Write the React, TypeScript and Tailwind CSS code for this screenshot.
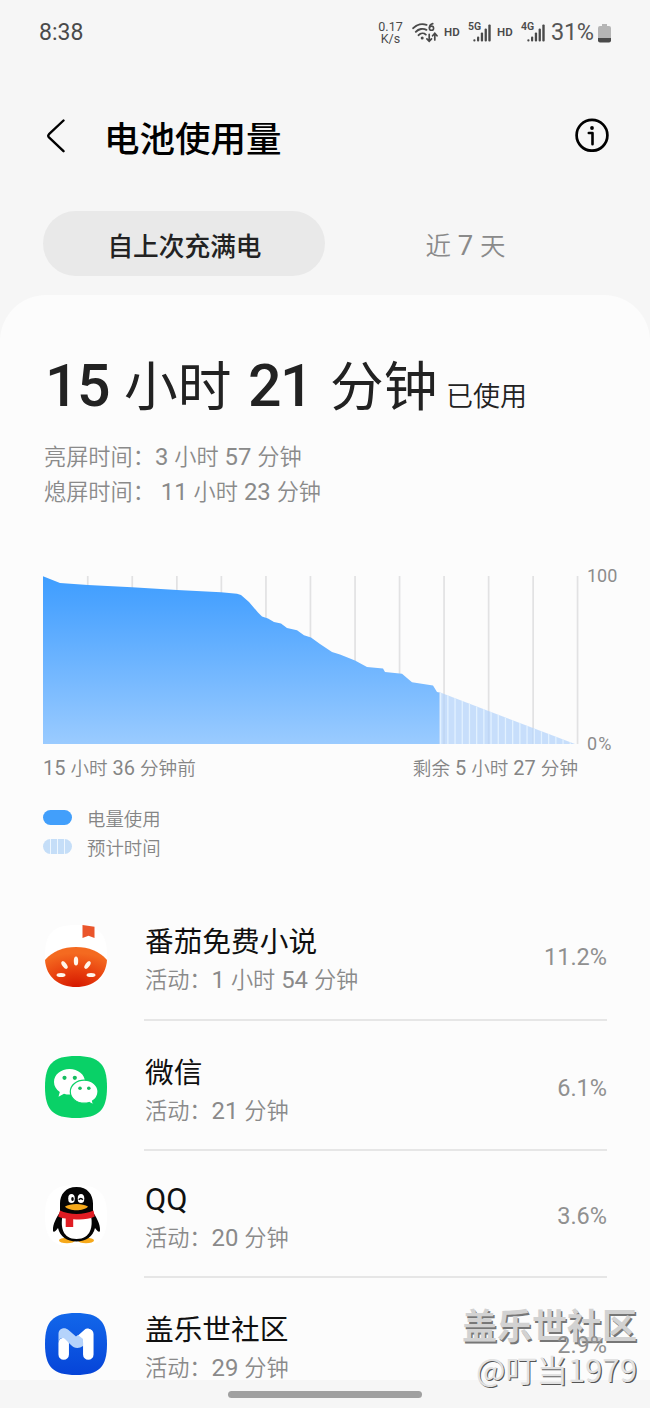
import React from "react";

/** Splits mixed text so Latin runs are set a little larger than the CJK around them. */
function Mixed({ text }: { text: string }) {
  const runs = text.match(/[\x20-\x7e]+|[^\x20-\x7e]+/g) ?? [];
  return (
    <>
      {runs.map((run, i) => (
        <span key={i} className={/^[\x20-\x7e]/.test(run) ? "text-[1.075em] font-normal whitespace-pre" : "whitespace-pre"}>
          {run}
        </span>
      ))}
    </>
  );
}

function Signal() {
  return (
    <svg width="18" height="18" viewBox="0 0 18 18" fill="#4a4a4a">
      <rect x="0.3" y="15.2" width="2.2" height="2.4" rx="1" />
      <rect x="4" y="12.5" width="2.2" height="5.1" rx="1" />
      <rect x="7.8" y="8.5" width="2.3" height="9.1" rx="1" />
      <rect x="11.6" y="4.5" width="2.3" height="13.1" rx="1" />
      <rect x="15.3" y="0.4" width="2.4" height="17.2" rx="1" />
    </svg>
  );
}

function StatusBar() {
  return (
    <div className="flex h-[64px] items-center pt-[2px] text-[#4a4a4a]">
      <div className="ml-[39px] pb-[2px] text-[23px] leading-none">8:38</div>
      <div className="ml-auto mr-[39px] flex h-[30px] items-center">
        <div className="mr-[9px] w-[26px] pl-px text-center text-[12.5px] leading-[12px]">
          <div>0.17</div>
          <div>K/s</div>
        </div>
        <svg width="26" height="22" viewBox="0 0 26 22" fill="none" stroke="#4a4a4a" strokeWidth="1.9" strokeLinecap="round">
          <path d="M1.2 6.2C5 2.2 10.5 1.3 14.5 2.8M3.8 9.8c2.8-3 7.3-3.8 10.6-2M6.6 13.2c2.1-2.3 5.3-2.3 7.2-.6" />
          <circle cx="10.2" cy="16" r="1.5" fill="#4a4a4a" stroke="none" />
          <path d="M20.8 1.6c-2.2.5-3.4 2.4-3.4 4.4" strokeWidth="1.6" />
          <circle cx="19.5" cy="6.2" r="2.1" strokeWidth="1.6" />
          <path d="M17.2 12.4v6.8m-2.3-2.4 2.3 2.5 2.3-2.5M22.8 18v-6.6m-2.2 2.4 2.2-2.5 2.2 2.5" strokeWidth="1.7" />
        </svg>
        <div className="ml-[6px] w-[17px] text-[11.5px] font-semibold leading-none">HD</div>
        <div className="relative ml-[12px] h-[18px] w-[18px]">
          <div className="absolute -left-[5px] -top-[2px] text-[10.5px] font-semibold leading-none">5G</div>
          <Signal />
        </div>
        <div className="ml-[6px] w-[17px] text-[11.5px] font-semibold leading-none">HD</div>
        <div className="relative ml-[13px] h-[18px] w-[18px]">
          <div className="absolute -left-[6px] -top-[2px] text-[10.5px] font-semibold leading-none">4G</div>
          <Signal />
        </div>
        <div className="ml-[6px] w-[43px] whitespace-nowrap text-[23.5px] leading-none tracking-[-0.3px] text-[#555]">31%</div>
        <svg className="ml-[4px]" width="13" height="19" viewBox="0 0 13 19">
          <path d="M4 0h5v2h2a2 2 0 0 1 2 2v11H0V4a2 2 0 0 1 2-2h2z" fill="#b5b5b5" />
          <path d="M0 14h13v2.6a2 2 0 0 1-2 2H2a2 2 0 0 1-2-2z" fill="#4a4a4a" />
        </svg>
      </div>
    </div>
  );
}

const GRID = [44.7, 89.2, 133.8, 178.3, 222.9, 267.4, 312, 356.5, 401, 445.6, 490.1, 534.5];
const STRIPES = Array.from({ length: 19 }, (_, i) => 397 + i * 7.2);

function Chart() {
  return (
    <div className="flex h-[168px]">
      <svg width="536" height="168" viewBox="0 0 536 168">
        <defs>
          <linearGradient id="use" x1="0" y1="0" x2="0" y2="1">
            <stop offset="0" stopColor="#3f9eff" />
            <stop offset="0.15" stopColor="#4ba3ff" />
            <stop offset="1" stopColor="#9acbff" />
          </linearGradient>
          <clipPath id="rest">
            <path d="M396 116L532 168H396z" />
          </clipPath>
        </defs>
        {GRID.map((x) => (
          <rect key={x} x={x - 0.8} y="0" width="1.7" height="168" fill="#e2e2e3" />
        ))}
        <g clipPath="url(#rest)">
          <rect x="396" y="110" width="140" height="58" fill="#b0d2fb" fillOpacity="0.7" />
          {STRIPES.map((x) => (
            <rect key={x} x={x} y="110" width="1.3" height="58" fill="#e2f1ff" />
          ))}
        </g>
        <path
          d="M0 .3L17 7L45 9L89 11.2L134 14L178 16.3L194 17.7L198 19L206 26L215 36.5L219 40.5L225 42.5L231 46L238 47.5L244 52L254 54.3L261 59.3L268 61.5L277 68L289 76L297 78.5L312 84.5L324 91L340 92.5L342 96L359 97.8L369 106.3L390 109.5L394 116L396.3 116.6V168H0z"
          fill="url(#use)"
        />
      </svg>
      <div className="-my-[9px] ml-[8px] flex flex-col justify-between text-[18px] leading-[18px] text-[#8c8c8c]">
        <span>100</span>
        <span className="tracking-[1.2px]">0%</span>
      </div>
    </div>
  );
}

function TomatoIcon() {
  return (
    <svg width="62" height="62" viewBox="0 0 62 62">
      <defs>
        <radialGradient id="tomato" cx="0.5" cy="1" r="0.85">
          <stop offset="0" stopColor="#d41800" />
          <stop offset="0.5" stopColor="#e83f0e" />
          <stop offset="1" stopColor="#f46a20" />
        </radialGradient>
      </defs>
      <path d="M31 0C54 0 62 8 62 31S54 62 31 62 0 54 0 31 8 0 31 0z" fill="#fff" />
      <path d="M0 35C8 26 18 22 31 22s23 4 31 13C61 52 48 62 31 62S1 52 0 35z" fill="url(#tomato)" />
      <path d="M37.5 0 49.5 1.8V13L43.5 10.8 37.5 13z" fill="#ea552b" />
      <g fill="#fff6ec">
        <ellipse cx="31" cy="36" rx="2.2" ry="4.6" />
        <ellipse cx="19.5" cy="40" rx="2.2" ry="4.4" transform="rotate(-36 19.5 40)" />
        <ellipse cx="42.5" cy="40" rx="2.2" ry="4.4" transform="rotate(36 42.5 40)" />
        <ellipse cx="16" cy="50" rx="4.5" ry="2.1" />
        <ellipse cx="46" cy="50" rx="4.5" ry="2.1" />
      </g>
    </svg>
  );
}

function WeChatIcon() {
  return (
    <svg width="62" height="62" viewBox="0 0 62 62">
      <path d="M31 0C54 0 62 8 62 31S54 62 31 62 0 54 0 31 8 0 31 0z" fill="#09d167" />
      <path d="M24.5 13C16 13 9 18.5 9 26c0 4 2.2 7.5 5.8 10l-1.3 4.8 5.5-3c1.8.6 3.6.8 5.5.8 8.5 0 15.5-5.6 15.5-12.8S33 13 24.5 13z" fill="#fff" />
      <path d="M39.3 24.2c-7.7 0-14 5-14 11.500s6.300 11.500 14 11.500c1.700 0 3.300-.2 4.800-.7l4.600 2.500-1.200-4c3.300-2.100 5.500-5.500 5.500-9.300 0-6.500-6-11.500-13.700-11.500z" fill="#fff" stroke="#09d167" strokeWidth="1.2" />
      <g fill="#16bd60">
        <circle cx="19.5" cy="21.8" r="2.1" />
        <circle cx="29.8" cy="21.8" r="2.1" />
        <circle cx="35" cy="32.2" r="1.8" />
        <circle cx="43.8" cy="32.2" r="1.8" />
      </g>
    </svg>
  );
}

function QQIcon() {
  return (
    <svg width="62" height="62" viewBox="0 0 62 62">
      <path d="M31 0C54 0 62 8 62 31S54 62 31 62 0 54 0 31 8 0 31 0z" fill="#fff" />
      <ellipse cx="22" cy="55.5" rx="8" ry="2.7" fill="#f6a91b" />
      <ellipse cx="41" cy="55.5" rx="8" ry="2.7" fill="#f6a91b" />
      <path d="M31.500 2C20.500 2 15 9.500 15 18.500V27C12 32 7.500 39 8 45.500c.3 2.500 2.500 1.200 5-2.500C15 51.500 22 56.500 31.500 56.500S48 51.500 50 43c2.500 3.700 4.700 5 5 2.500C55.500 39 51 32 48 27v-8.500C48 9.500 42.500 2 31.500 2z" fill="#050505" />
      <path d="M17.5 31h28.500c2 10 0 23-14.500 23S15.500 41 17.500 31z" fill="#fff" />
      <path d="M15 25.500c9 4.500 24 4.500 33.500 0l1.200 6c-6 3-13 3.300-21.500 2.800V42h-7.500v-8.500c-3.500-.4-5.500-1-7.500-2z" fill="#e01c23" />
      <ellipse cx="26.5" cy="13.5" rx="3.3" ry="4.6" fill="#fff" />
      <ellipse cx="36" cy="13.5" rx="3.3" ry="4.6" fill="#fff" />
      <ellipse cx="27.5" cy="14" rx="1.3" ry="2" fill="#050505" />
      <path d="M33.8 14.800q2-2.800 4 0" fill="none" stroke="#050505" strokeWidth="1.5" />
      <path d="M20 21.500c5-3.500 18-3.500 23 0-4 5-19 5-23 0z" fill="#f6a91b" />
    </svg>
  );
}

function CommunityIcon() {
  return (
    <svg width="62" height="62" viewBox="0 0 62 62">
      <defs>
        <linearGradient id="blue" x1="0" y1="0" x2="0" y2="1">
          <stop offset="0" stopColor="#1267ea" />
          <stop offset="1" stopColor="#0644d8" />
        </linearGradient>
      </defs>
      <path d="M31 0C54 0 62 8 62 31S54 62 31 62 0 54 0 31 8 0 31 0z" fill="url(#blue)" />
      <path d="M18.7 30v11.500M43.300 21v20.500" stroke="#fff" strokeWidth="10.5" strokeLinecap="round" />
      <path d="M42.5 20 34 27.500" stroke="#fff" strokeWidth="9" strokeLinecap="round" />
      <path d="M13.500 29v-8c0-5.500 6-7.500 10-4l7.500 6.500 2-1.500 5 4V33c-4 3-9 2.500-12-1l-5.500-5.500c-3-2.800-6-1.500-7 2.500z" fill="#b5d3fb" />
    </svg>
  );
}

interface RowProps {
  icon: React.ReactNode;
  name: string;
  detail: string;
  percent: string;
  className: string;
  last?: boolean;
  latin?: boolean;
}

function AppRow({ icon, name, detail, percent, className, last, latin }: RowProps) {
  return (
    <div className={`flex pl-[45px] pr-[43px] ${className}`}>
      <div className={`w-[99px] shrink-0 ${latin ? "pt-[34px]" : "pt-[35px]"}`}>{icon}</div>
      <div className={`flex flex-1 items-start justify-between ${last ? "" : "border-b-2 border-[#e6e6e6]"}`}>
        <div className={`pl-px ${latin ? "pt-[29px]" : "pt-[32px]"}`}>
          <div className="h-[40px] text-[28.7px] leading-[40px] text-[#101010]">
            <Mixed text={name} />
          </div>
          <div className="h-[37px] text-[22.2px] font-[350] leading-[37px] text-[#8a8a8a]">
            <Mixed text={detail} />
          </div>
        </div>
        <div className={`relative z-10 text-[23.5px] leading-[30px] text-[#909090] ${latin ? "pt-[50px]" : "pt-[52px]"}`}>{percent}</div>
      </div>
    </div>
  );
}

export default function App() {
  return (
    <div className="relative flex h-[1408px] w-[650px] flex-col overflow-hidden bg-[#f6f6f6] font-['Roboto','Noto_Sans_CJK_SC',sans-serif]">
      <StatusBar />
      <header className="flex h-[147px] items-start pt-[54px]">
        <svg className="ml-[46px] mt-px" width="20" height="34" viewBox="0 0 20 34" fill="none" stroke="#000" strokeWidth="2.4" strokeLinecap="round" strokeLinejoin="round">
          <path d="M17.5 1.5 3 15.200q-1.500 1.600 0 3.200L17.500 32.200" />
        </svg>
        <h1 className="ml-[38px] mt-[2px] text-[35.5px] font-medium leading-[40px] text-black">电池使用量</h1>
        <svg className="ml-auto mr-[41px]" width="34" height="34" viewBox="0 0 34 34" fill="none" stroke="#000">
          <circle cx="17" cy="17.3" r="15.400" strokeWidth="2.7" />
          <circle cx="17" cy="10" r="1.9" fill="#000" stroke="none" />
          <path d="M13.8 15h3.700v11.300" strokeWidth="2.6" strokeLinecap="round" strokeLinejoin="round" />
        </svg>
      </header>
      <nav className="flex h-[84px] items-start px-[43px]">
        <div className="h-[65px] w-[282px] rounded-full bg-[#e9e9e9] pl-px text-center text-[25.7px] font-medium leading-[72px] text-[#222]">自上次充满电</div>
        <div className="h-[65px] w-[282px] pr-px text-center text-[25.5px] font-[350] leading-[71px] text-[#8a8a8a]">
          <Mixed text="近 7 天" />
        </div>
      </nav>
      <main className="flex h-[1085px] shrink-0 flex-col overflow-hidden rounded-t-[46px] bg-[#fcfcfc]">
        <div className="flex h-[142px] shrink-0 items-baseline whitespace-nowrap pl-[45px] pt-[56px] leading-[70px] text-[#222]">
          <span className="w-[79px] text-[59px] font-medium tracking-[-1.5px]">15</span>
          <span className="w-[124px] text-[53.7px]">小时</span>
          <span className="w-[82px] text-[59px] font-medium tracking-[-1.5px]">21</span>
          <span className="w-[116px] text-[53.7px]">分钟</span>
          <span className="text-[27px] font-[350]">已使用</span>
        </div>
        <div className="h-[139px] shrink-0 pl-[44px] pt-[3px] text-[22.2px] font-[350] leading-[35px] text-[#8a8a8a]">
          <div className="h-[35px]">
            <Mixed text="亮屏时间：3 小时 57 分钟" />
          </div>
          <div className="h-[35px]">
            <Mixed text="熄屏时间： 11 小时 23 分钟" />
          </div>
        </div>
        <section className="shrink-0 pl-[43px]">
          <Chart />
          <div className="flex h-[59px] w-[535px] justify-between pt-[9px] text-[18.6px] font-[350] leading-[30px] text-[#858585]">
            <div>
              <Mixed text="15 小时 36 分钟前" />
            </div>
            <div>
              <Mixed text="剩余 5 小时 27 分钟" />
            </div>
          </div>
          <div className="flex h-[29px] items-center gap-[15px] text-[18.4px] font-[350] text-[#858585]">
            <div className="h-[15px] w-[29px] rounded-full bg-[#429ffb]" />
            <span className="pt-[4px] leading-[25px]">电量使用</span>
          </div>
          <div className="flex h-[29px] items-center gap-[15px] text-[18.4px] font-[350] text-[#858585]">
            <div className="flex h-[15px] w-[29px] justify-between overflow-hidden rounded-full bg-[#c5def8] px-[7px]">
              <i className="w-px bg-[#eef7ff]" />
              <i className="w-px bg-[#eef7ff]" />
              <i className="w-px bg-[#eef7ff]" />
            </div>
            <span className="pt-[5px] leading-[24px]">预计时间</span>
          </div>
        </section>
        <section className="mt-[29px] shrink-0">
          <AppRow className="h-[131px]" icon={<TomatoIcon />} name="番茄免费小说" detail="活动：1 小时 54 分钟" percent="11.2%" />
          <AppRow className="h-[130px]" icon={<WeChatIcon />} name="微信" detail="活动：21 分钟" percent="6.1%" />
          <AppRow className="h-[127px]" icon={<QQIcon />} name="QQ" detail="活动：20 分钟" percent="3.6%" latin />
          <AppRow className="h-[130px]" icon={<CommunityIcon />} name="盖乐世社区" detail="活动：29 分钟" percent="2.9%" last />
        </section>
      </main>
      <footer className="flex h-[28px] shrink-0 justify-center bg-[#f6f6f6] pt-[11px]">
        <div className="h-[7px] w-[194px] rounded-full bg-[#a0a0a0]" />
      </footer>
      <div className="absolute right-[13px] top-[1302px] whitespace-nowrap text-right font-['Noto_Sans_CJK_SC',sans-serif]">
        <div className="text-[35px] font-bold leading-[44px] text-[#d2d2d2] [text-shadow:1.5px_1.5px_0_#777]">盖乐世社区</div>
        <div className="text-[31.2px] leading-[46px] text-[#e2e2e2] [text-shadow:1.2px_1.2px_0_#555]">@叮当1979</div>
      </div>
    </div>
  );
}
